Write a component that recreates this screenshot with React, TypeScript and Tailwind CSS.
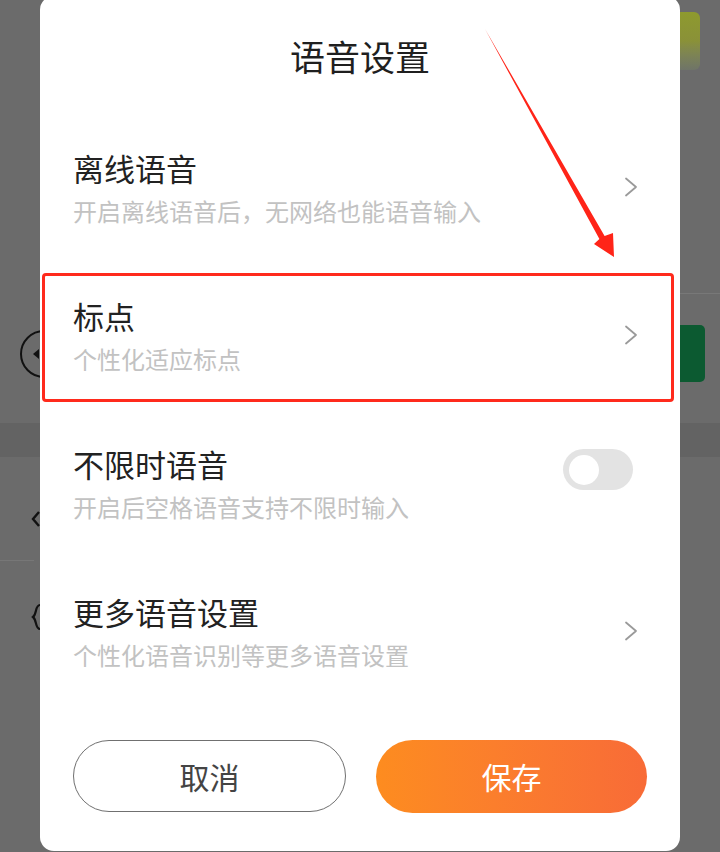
import React from "react";

function Chevron() {
  return (
    <svg width="14" height="20" viewBox="0 0 14 20" className="shrink-0">
      <polyline points="2,1.5 12,10 2,18.5" fill="none" stroke="#9a9a9a" strokeWidth="1.8" strokeLinecap="round" strokeLinejoin="round" />
    </svg>
  );
}

function Toggle() {
  return (
    <div className="w-[70px] h-[41px] rounded-full bg-[#e3e3e3] flex items-center pl-[6px] mb-[27px] shrink-0">
      <div className="w-[30px] h-[30px] rounded-full bg-white" />
    </div>
  );
}

function Row({ title, sub, right }: { title: string; sub: string; right: React.ReactNode }) {
  return (
    <div className="h-[148px] flex items-center pl-[33px] pr-[42px]">
      <div className="flex-1 flex flex-col gap-[10px]">
        <div className="text-[31px] leading-[36px] text-[#222222]">{title}</div>
        <div className="text-[24px] leading-[29px] text-[#c2c2c2]">{sub}</div>
      </div>
      {right}
    </div>
  );
}

export default function App() {
  return (
    <div className="relative w-[720px] h-[852px] overflow-hidden bg-[#6b6b6b] font-['Noto_Sans_CJK_SC','Noto_Sans',sans-serif]">
      {/* dimmed page behind the dialog */}
      <div className="flex flex-col w-full">
        <div className="h-[293px] flex justify-end pt-[12px] pr-[20px]">
          <div className="w-[30px] h-[58px] rounded-[6px] bg-gradient-to-b from-[#8e9a2e] via-[#8a9138] to-[#6f7468]" />
        </div>
        <div className="flex justify-end">
          <div className="w-[40px] h-px bg-[#787878]" />
        </div>
        <div className="h-[129px] flex justify-between items-start">
          <div className="ml-[20px] mt-[36px] w-[48px] h-[48px] rounded-full border-[2.5px] border-[#111] flex items-center pl-[11px]">
            <div className="w-0 h-0 border-y-[5px] border-y-transparent border-r-[6px] border-r-[#111]" />
          </div>
          <div className="mr-[15px] mt-[31px] w-[50px] h-[57px] rounded-[5px] bg-[#0c5a31]" />
        </div>
        <div className="h-[34px] bg-[#636363]" />
        <div className="h-[103px] flex items-start">
          <svg width="10" height="18" viewBox="0 0 10 18" className="ml-[31px] mt-[53px]">
            <polyline points="8,2 2,9 8,16" fill="none" stroke="#111" strokeWidth="2.4" />
          </svg>
        </div>
        <div className="w-[34px] h-px bg-[#777777]" />
        <div className="h-[200px] flex items-start">
          <svg width="10" height="28" viewBox="0 0 10 28" className="ml-[31px] mt-[42px]">
            <path d="M9 2 C4 2 6 11 2 14 C6 17 4 26 9 26" fill="none" stroke="#111" strokeWidth="2.2" />
          </svg>
        </div>
      </div>

      {/* dialog */}
      <div className="absolute left-[40px] top-[-4px] w-[640px] h-[855px] bg-white rounded-[14px] flex flex-col">
        <div className="h-[117px] pt-[40px] flex justify-center">
          <div className="text-[35px] leading-[40px] text-[#1f1f1f]">语音设置</div>
        </div>
        <Row title="离线语音" sub="开启离线语音后，无网络也能语音输入" right={<Chevron />} />
        <Row title="标点" sub="个性化适应标点" right={<Chevron />} />
        <Row title="不限时语音" sub="开启后空格语音支持不限时输入" right={<div className="mr-[5px]"><Toggle /></div>} />
        <Row title="更多语音设置" sub="个性化语音识别等更多语音设置" right={<Chevron />} />
        <div className="mt-[35px] flex gap-[30px] px-[33px]">
          <button className="flex-1 h-[72px] rounded-full border-[1.5px] border-[#707070] bg-white text-[30px] text-[#444444] flex items-center justify-center">
            取消
          </button>
          <button className="flex-1 h-[73px] rounded-full bg-gradient-to-r from-[#fd8c1f] to-[#f86b37] text-[30px] text-white flex items-center justify-center">
            保存
          </button>
        </div>
      </div>

      {/* annotation: red box */}
      <div className="absolute left-[42px] top-[273px] w-[632px] h-[129px] border-[3px] border-[#ff2a1c] rounded-[4px]" />

      {/* annotation: red arrow */}
      <svg className="absolute left-0 top-0" width="720" height="852" viewBox="0 0 720 852">
        <polygon points="485,29 604.6,236 613,233 614,257 594,244 599.4,239" fill="#ff2418" />
      </svg>
    </div>
  );
}
